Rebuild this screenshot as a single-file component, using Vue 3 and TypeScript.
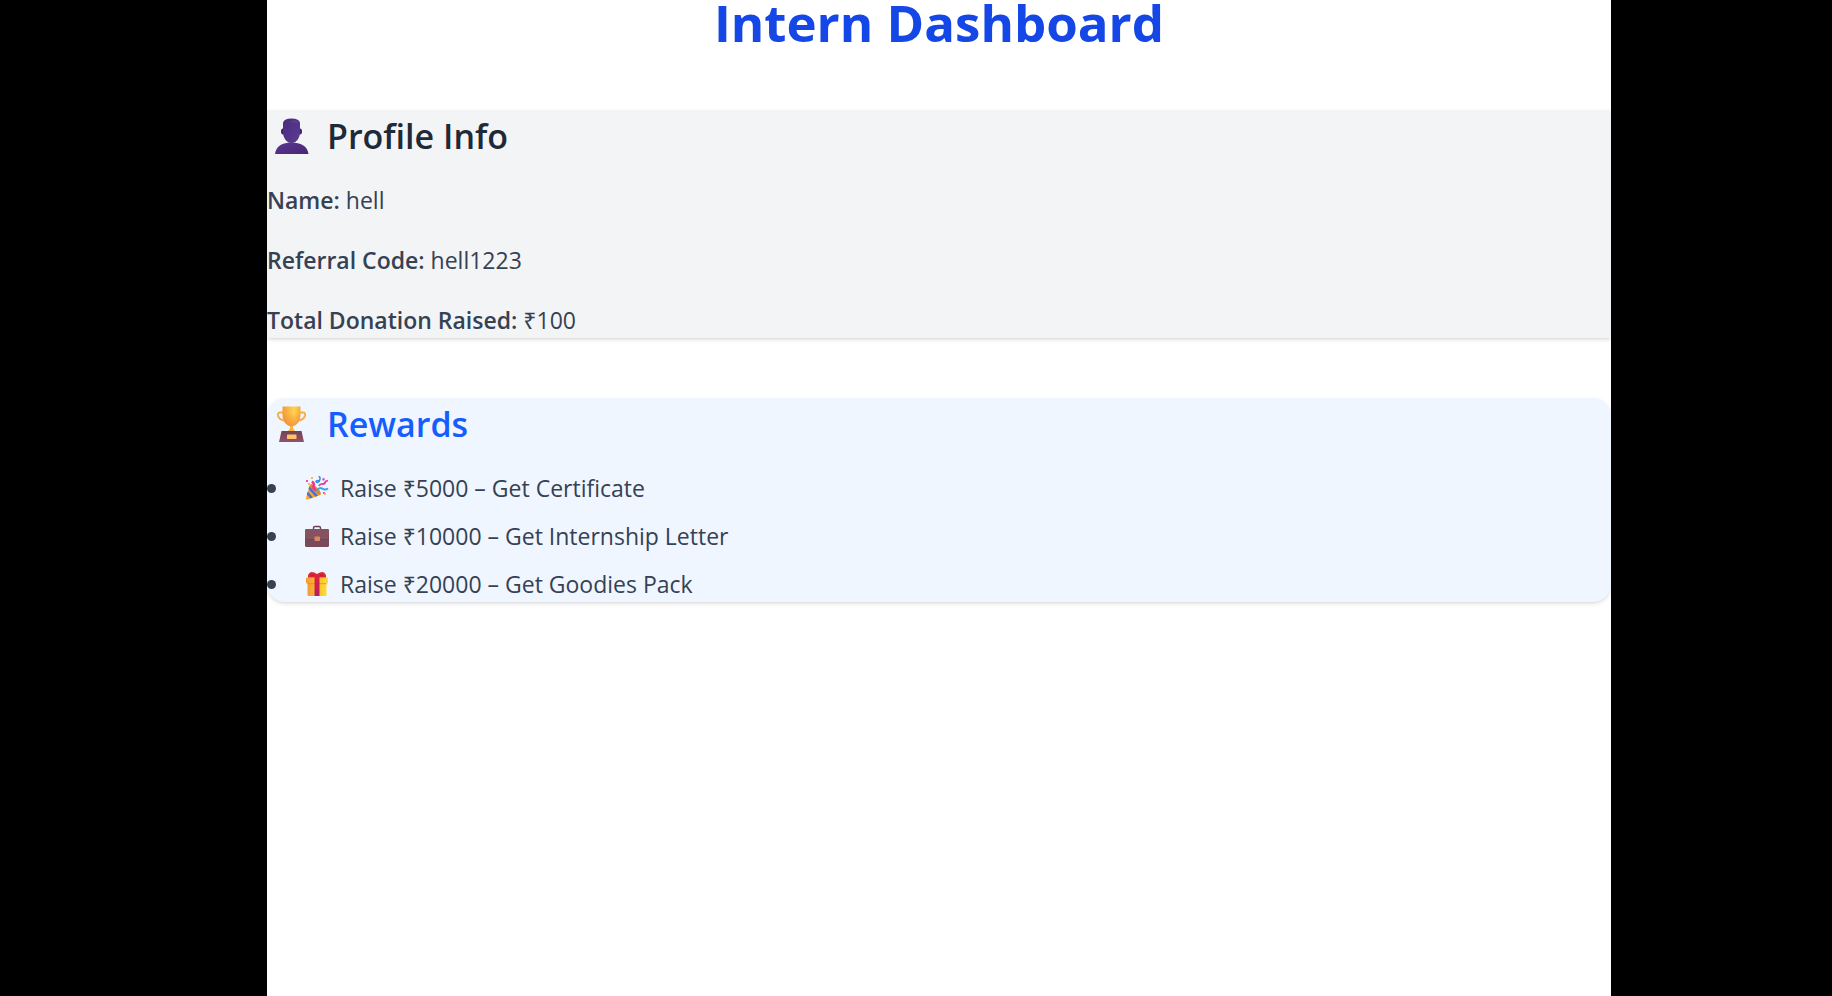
<script setup lang="ts">
interface ProfileField {
  label: string
  value: string
}

interface Reward {
  icon: 'party' | 'briefcase' | 'gift'
  text: string
}

const profile: ProfileField[] = [
  { label: 'Name:', value: 'hell' },
  { label: 'Referral Code:', value: 'hell1223' },
  { label: 'Total Donation Raised:', value: '₹100' },
]

const rewards: Reward[] = [
  { icon: 'party', text: 'Raise ₹5000 – Get Certificate' },
  { icon: 'briefcase', text: 'Raise ₹10000 – Get Internship Letter' },
  { icon: 'gift', text: 'Raise ₹20000 – Get Goodies Pack' },
]
</script>

<template>
  <div class="page">
    <main class="dashboard">
      <h1 class="title">Intern Dashboard</h1>

      <section class="card profile">
        <h2 class="heading">
          <svg class="heading-icon" viewBox="0 0 36 36" aria-hidden="true">
            <defs>
              <linearGradient id="bust-head" x1="0" y1="0" x2="1" y2="1">
                <stop offset="0" stop-color="#4b2b78" />
                <stop offset="0.55" stop-color="#54348a" />
                <stop offset="1" stop-color="#5d3b92" />
              </linearGradient>
              <linearGradient id="bust-body" x1="0" y1="0" x2="1" y2="1">
                <stop offset="0" stop-color="#5c3893" />
                <stop offset="1" stop-color="#472670" />
              </linearGradient>
            </defs>
            <path d="M1 36C2 28 8.500 24.500 17.500 24.500S33.500 28 34.500 36Z" fill="url(#bust-body)" />
            <ellipse cx="9" cy="13.500" rx="2" ry="3" fill="#3d2066" />
            <ellipse cx="26" cy="13.500" rx="2" ry="3" fill="#3d2066" />
            <path d="M9 5Q9.500 0.500 17.500 0.500T26 5V14C26 20 22.500 25 17.500 25S9 20 9 14Z" fill="url(#bust-head)" />
            <path d="M17 4Q21 2.500 24 4.500" stroke="#6b47a0" stroke-width="1.500" fill="none" opacity="0.6" />
          </svg>
          Profile Info
        </h2>
        <p v-for="field in profile" :key="field.label" class="field">
          <strong>{{ field.label }}</strong> {{ field.value }}
        </p>
      </section>

      <section class="card rewards">
        <h2 class="heading">
          <svg class="heading-icon" viewBox="0 0 36 36" aria-hidden="true">
            <defs>
              <linearGradient id="cup" x1="0" y1="0" x2="1" y2="0">
                <stop offset="0" stop-color="#f59b38" />
                <stop offset="0.65" stop-color="#ffd34f" />
                <stop offset="1" stop-color="#f5aa3b" />
              </linearGradient>
              <linearGradient id="cup-shade" x1="0" y1="0" x2="0" y2="1">
                <stop offset="0.3" stop-color="#f08a3a" stop-opacity="0" />
                <stop offset="1" stop-color="#ee8b3d" stop-opacity="0.8" />
              </linearGradient>
              <linearGradient id="plinth" x1="0" y1="0" x2="0" y2="1">
                <stop offset="0" stop-color="#704453" />
                <stop offset="1" stop-color="#93506b" />
              </linearGradient>
            </defs>
            <path d="M9 6.500H6Q3.500 6.500 4 9.500Q5 14 11 14.500M26 6.500H29Q31.500 6.500 31 9.500Q30 14 24 14.500" fill="none" stroke="#f8ae42" stroke-width="2" />
            <path d="M16 18H19V22Q20 24.500 22 26H13Q15 24.500 16 22Z" fill="#f6b544" />
            <path d="M8.500 0.500H26.500V8C26.500 15.500 23 19.500 17.500 20.500C12 19.500 8.500 15.500 8.500 8Z" fill="url(#cup)" />
            <path d="M8.500 0.500H26.500V8C26.500 15.500 23 19.500 17.500 20.500C12 19.500 8.500 15.500 8.500 8Z" fill="url(#cup-shade)" />
            <path d="M7.500 25H27.500L30 36H5Z" fill="url(#plinth)" />
            <rect x="13" y="28.500" width="9.500" height="4.500" rx="0.500" fill="#ffc267" />
          </svg>
          Rewards
        </h2>
        <ul class="reward-list">
          <li v-for="reward in rewards" :key="reward.icon" class="reward">
            <svg v-if="reward.icon === 'party'" class="reward-icon" viewBox="0 0 24 24" aria-hidden="true">
              <path d="M5 8.500L15.500 19L2.500 23.500Q0.500 24 1 22Z" fill="#f9a72b" />
              <path d="M4.500 10L13 19.800L10.500 20.700L3.500 13ZM2.800 15.500L8 21.500L5.500 22.400L1.800 18.500Z" fill="#4970d9" />
              <ellipse cx="10.500" cy="13.500" rx="2.500" ry="7.200" transform="rotate(-45 10.500 13.500)" fill="#e08a25" />
              <path d="M7 5.500Q10 8 8.500 10.500Q8 13 11 14" fill="none" stroke="#f92f8c" stroke-width="2.400" />
              <path d="M13.500 0.500Q16 1 14.500 4.500Q12.500 8 11 5.500Q11.500 3.500 15 5.500" fill="none" stroke="#2f91e5" stroke-width="1.500" />
              <path d="M12 15Q14 11 17 12.500Q20 14.500 23 12.500" fill="none" stroke="#36a5ee" stroke-width="2" />
              <path d="M14 10Q15 7.500 18 8Q20 8 20.500 5.500L23 4.500" fill="none" stroke="#ef3ba0" stroke-width="1.800" />
              <path d="M1 4H3V6H1ZM17 3L19 1.500L20 3.500L18 5ZM18 16H20V18H18Z" fill="#ee50af" />
              <path d="M6 1H8V3H6ZM19 17H21V19H19ZM3 7H5V9H3Z" fill="#fcb45b" />
            </svg>
            <svg v-else-if="reward.icon === 'briefcase'" class="reward-icon" viewBox="0 0 24 24" aria-hidden="true">
              <path d="M8.500 6V4Q8.500 2.500 10 2.500H14Q15.500 2.500 15.500 4V6" fill="none" stroke="#704353" stroke-width="1.500" />
              <rect x="0" y="5" width="24" height="18" rx="1.500" fill="#784b5b" />
              <path d="M0 6.500Q0 5 1.500 5H22.500Q24 5 24 6.500V13Q24 15 21 15H3Q0 15 0 13Z" fill="#865260" />
              <path d="M0 14Q1 15.500 3 15.500H21Q23 15.500 24 14" fill="none" stroke="#704555" stroke-width="0.800" />
              <rect x="9.500" y="12.500" width="5.500" height="4.500" rx="0.800" fill="#d88767" />
            </svg>
            <svg v-else class="reward-icon" viewBox="0 0 24 24" aria-hidden="true">
              <defs>
                <linearGradient id="box" x1="0" y1="0" x2="1" y2="0">
                  <stop offset="0" stop-color="#f49c35" />
                  <stop offset="1" stop-color="#ffdc31" />
                </linearGradient>
                <linearGradient id="ribbon" x1="0" y1="0" x2="0" y2="1">
                  <stop offset="0" stop-color="#df2639" />
                  <stop offset="1" stop-color="#b51e61" />
                </linearGradient>
              </defs>
              <rect x="2.500" y="9" width="19" height="15" rx="1" fill="url(#box)" />
              <rect x="1" y="5.500" width="22" height="6" rx="1" fill="url(#box)" />
              <path d="M2.500 11.700H21.500" stroke="#db832d" stroke-width="0.700" />
              <path d="M3 5.500Q2.500 1 6.500 0Q9 0 12 2Q15 0 17.500 0Q21.500 1 21 5.500Z" fill="#df2337" />
              <path d="M6 4Q8 1.500 10.500 5M18 4Q16 1.500 13.500 5" fill="none" stroke="#b31c38" stroke-width="0.800" />
              <rect x="9.500" y="2" width="5" height="22" fill="url(#ribbon)" />
            </svg>
            <span>{{ reward.text }}</span>
          </li>
        </ul>
      </section>
    </main>
  </div>
</template>

<style>
body {
  margin: 0;
  background: #000000;
}
</style>

<style scoped>
.page {
  box-sizing: border-box;
  min-height: 100vh;
  padding: 0 221px 0 267px;
  display: flex;
  background: #000000;
  font-family: "Segoe UI", "Open Sans", "Noto Sans", sans-serif;
  font-size: 23px;
  line-height: 36px;
  color: #364153;
}

.dashboard {
  flex: 1;
  min-width: 0;
  display: flex;
  flex-direction: column;
  background: #ffffff;
}

.title {
  margin: 0 0 66px;
  font-size: 51px;
  line-height: 44px;
  font-weight: 700;
  text-align: center;
  color: #1447e6;
}

.card {
  box-shadow: 0 2px 4px rgba(0, 0, 0, 0.1), 0 2px 3px -2px rgba(0, 0, 0, 0.1);
}

.profile {
  display: flex;
  flex-direction: column;
  gap: 24px;
  margin-bottom: 60px;
  background: #f3f4f6;
}

.rewards {
  border-radius: 18px;
  background: #eff6ff;
}

.heading {
  display: flex;
  align-items: center;
  gap: 17px;
  margin: 0;
  padding: 4px 0 0 7px;
  font-size: 34px;
  line-height: 44px;
  font-weight: 600;
  color: #1e2939;
}

.rewards .heading {
  margin-bottom: 24px;
  color: #155dfc;
}

.heading-icon {
  width: 36px;
  height: 36px;
}

.field {
  margin: 0;
}

.field strong {
  font-weight: 600;
}

.reward-list {
  display: flex;
  flex-direction: column;
  gap: 12px;
  margin: 0;
  padding: 0;
  list-style: none;
}

.reward {
  display: flex;
  align-items: center;
}

.reward::before {
  content: "";
  width: 9px;
  height: 9px;
  margin-right: 29px;
  border-radius: 50%;
  background: #364153;
}

.reward-icon {
  width: 24px;
  height: 24px;
  margin-right: 11px;
}
</style>
